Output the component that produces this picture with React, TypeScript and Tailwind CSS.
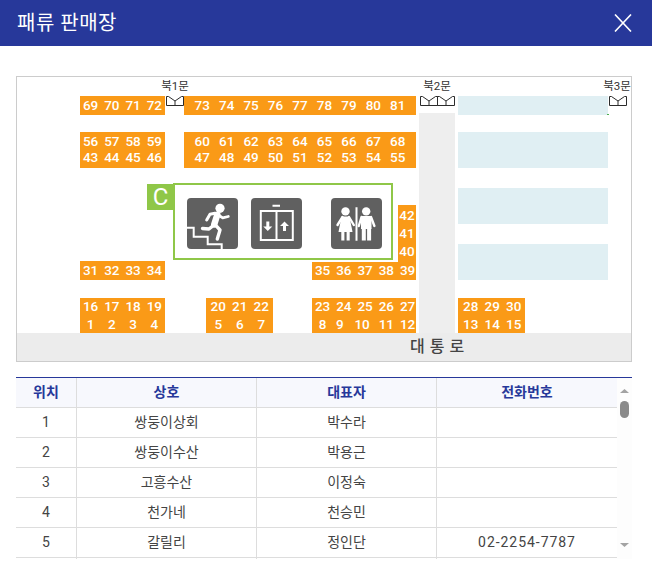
import React from "react";

const Cell = ({ n, className = "" }: { n: number; className?: string }) => (
  <span className={`flex items-center justify-center ${className}`}>{n}</span>
);

const Block = ({ className, nums }: { className: string; nums: (number | [number, string])[] }) => (
  <div className={`grid shrink-0 bg-[#fa9a17] text-[13.5px] font-medium leading-none text-white ${className}`}>
    {nums.map((n) =>
      Array.isArray(n) ? <Cell key={n[0]} n={n[0]} className={n[1]} /> : <Cell key={n} n={n} />
    )}
  </div>
);

const Door = () => (
  <svg width="18" height="10" viewBox="0 0 18 10" fill="none" stroke="#2b2b2b" strokeWidth="1" className="block shrink-0">
    <path d="M.5.5V9.5H17.5V.5H15.5L9 5V9.5M9 5L2.5.5H.5" />
  </svg>
);

const Label = ({ text, className = "" }: { text: string; className?: string }) => (
  <div className={`h-[16px] w-max text-center text-[11.5px] leading-[13px] text-[#333] ${className}`}>{text}</div>
);

const Exit = () => (
  <svg width="51" height="51" viewBox="0 0 51 51" className="block shrink-0 rounded-[4px] bg-[#606060]">
    <circle cx="33" cy="10.3" r="4.6" fill="#fff" />
    <g fill="none" stroke="#fff" strokeLinecap="round" strokeLinejoin="round">
      <path d="M30.3 16.8L27.2 26.5" strokeWidth="6.4" />
      <path d="M31.3 17L35.7 19.9L41.3 18.5" strokeWidth="2.8" />
      <path d="M28 15.3L23 16.3L19.7 22" strokeWidth="3" />
      <path d="M27 27L22 31L15.5 30.5" strokeWidth="3.4" />
      <path d="M29 27.7L33 32L30.3 41" strokeWidth="3.4" />
    </g>
    <path d="M0 29.7H6.7V38.7H20.7V46.3H34.7V51" fill="none" stroke="#fff" strokeWidth="2" />
  </svg>
);

const Elevator = () => (
  <svg width="51" height="51" viewBox="0 0 51 51" className="ml-[12.5px] block shrink-0 rounded-[4px] bg-[#606060]">
    <path d="M21.5 7.7H29" stroke="#fff" strokeWidth="2" />
    <path d="M9.8 42V13H41.8V42M25.5 13V42M8.8 42H42.8" fill="none" stroke="#fff" strokeWidth="2" />
    <path d="M15.3 23.5H18.3V28.5H21.3L16.8 33L12.3 28.5H15.3Z" fill="#fff" />
    <path d="M32 33H35V28H38L33.5 23.5L29 28H32Z" fill="#fff" />
  </svg>
);

const Restroom = () => (
  <svg width="51" height="51" viewBox="0 0 51 51" className="ml-[29px] block shrink-0 rounded-[4px] bg-[#606060]">
    <path d="M25.5 9.3V42.7" stroke="#fff" strokeWidth="2" />
    <circle cx="14.5" cy="13.4" r="4.2" fill="#fff" />
    <circle cx="35.2" cy="13.4" r="4.2" fill="#fff" />
    <path d="M10.5 18.5H18.5L21.5 34H7.5Z" fill="#fff" />
    <path d="M11.5 19L6.5 27M18 19L22.8 27" stroke="#fff" strokeWidth="2.4" strokeLinecap="round" fill="none" />
    <path d="M10.3 33H13.4V42.5H10.3ZM15.6 33H18.7V42.5H15.6Z" fill="#fff" />
    <path d="M31 18H39.8Q40.5 18 40.5 19V31H30V19Q30 18 31 18Z" fill="#fff" />
    <path d="M30.5 19L27.8 28M40 19L43.4 28" stroke="#fff" strokeWidth="2.4" strokeLinecap="round" fill="none" />
    <path d="M30.8 30H34.8V42.5H30.8ZM36.1 30H40.1V42.5H36.1Z" fill="#fff" />
  </svg>
);

const rows = [
  ["1", "쌍둥이상회", "박수라", ""],
  ["2", "쌍둥이수산", "박용근", ""],
  ["3", "고흥수산", "이정숙", ""],
  ["4", "천가네", "천승민", ""],
  ["5", "갈릴리", "정인단", "02-2254-7787"],
  ["", "", "", ""],
];

const th = "h-[30px] border-b border-r border-[#ddd] bg-[#f7f8fd] p-0 text-center text-[14px] font-bold text-[#27389a]";
const td = "h-[30px] border-b border-r border-[#ddd] p-0 text-center text-[14px] font-normal text-[#444]";

export default function App() {
  return (
    <div className="h-[572px] w-[652px] overflow-hidden bg-white font-['Roboto','Noto_Sans_CJK_KR',sans-serif]">
      <header className="flex h-[46px] items-center justify-between bg-[#27389a] pl-[17px] pr-[20px]">
        <h1 className="text-[20px] font-normal leading-none tracking-[0.5px] text-white">패류 판매장</h1>
        <svg width="18" height="18" viewBox="0 0 18 18" fill="none" stroke="#fff" strokeWidth="1.6" className="block">
          <path d="M1 .5L17 17.5M17 .5L1 17.5" />
        </svg>
      </header>

      <main className="px-4 pt-[30px]">
        {/* floor plan */}
        <div className="flex h-[286px] w-[616px] flex-col border border-[#ccc] bg-white">
          <div className="flex h-[256px]">
            {/* west hall */}
            <div className="flex w-[399px] shrink-0 flex-col pt-[3px]">
              <div className="flex w-[316px] justify-center"><Label text="북1문" /></div>
              <div className="flex h-[19px] pl-[63px]">
                <Block className="w-[85px] grid-cols-[repeat(4,21.25px)]" nums={[69, 70, 71, 72]} />
                <div className="w-[19px] pl-px"><Door /></div>
                <Block className="w-[232px] grid-cols-9 px-[6px]" nums={[73, 74, 75, 76, 77, 78, 79, 80, 81]} />
              </div>
              <div className="mt-[17px] flex h-[36px] gap-[19px] pl-[63px]">
                <Block className="w-[85px] auto-rows-[16px] grid-cols-[repeat(4,21.25px)] pt-[2px]" nums={[56, 57, 58, 59, 43, 44, 45, 46]} />
                <Block className="w-[232px] auto-rows-[16px] grid-cols-9 px-[6px] pt-[2px]" nums={[60, 61, 62, 63, 64, 65, 66, 67, 68, 47, 48, 49, 50, 51, 52, 53, 54, 55]} />
              </div>
              <div className="mt-[15px] flex h-[77px] items-start pl-[130px]">
                <div className="mt-px flex h-[26px] w-[27px] shrink-0 items-center justify-center bg-[#8fc748] text-[24px] leading-none text-white">C</div>
                <div className="-ml-px flex h-[77px] w-[220px] shrink-0 items-start border-2 border-[#8fc748] bg-white pl-[12px] pt-[13px]">
                  <Exit />
                  <Elevator />
                  <Restroom />
                </div>
                <Block className="ml-[5px] mt-[22px] h-[57px] w-[18px] auto-rows-[18px] grid-cols-1 pt-[2px]" nums={[42, 41, 40]} />
              </div>
              <div className="mt-px flex h-[19px] items-end pl-[63px]">
                <Block className="h-[19px] w-[85px] grid-cols-[repeat(4,21.25px)]" nums={[31, 32, 33, 34]} />
                <Block className="ml-[147px] h-[18px] w-[104px] grid-cols-[repeat(5,21.25px)]" nums={[35, 36, 37, 38, 39]} />
              </div>
              <div className="mt-[18px] flex h-[35px] pl-[63px]">
                <Block className="w-[85px] auto-rows-[18px] grid-cols-[repeat(4,21.25px)]" nums={[16, 17, 18, 19, 1, 2, 3, 4]} />
                <Block className="ml-[41px] w-[67px] auto-rows-[18px] grid-cols-[repeat(3,21.5px)] pl-[1.5px]" nums={[20, 21, 22, 5, 6, 7]} />
                <Block className="ml-[39px] w-[104px] auto-rows-[18px] grid-cols-[repeat(5,21.25px)]" nums={[23, 24, 25, 26, 27, 8, [9, "-translate-x-[4px]"], [10, "-translate-x-[3px]"], 11, 12]} />
              </div>
            </div>

            {/* central aisle */}
            <div className="ml-[3px] flex w-[36px] shrink-0 flex-col items-center pt-[3px]">
              <Label text="북2문" />
              <div className="flex h-[17px] w-[34px]">
                <div className="w-[17px]"><Door /></div>
                <div className="w-[17px]"><Door /></div>
              </div>
              <div className="w-full flex-1 bg-[#eee]" />
            </div>

            {/* east hall */}
            <div className="ml-[3px] flex w-[150px] shrink-0 flex-col pt-[19px]">
              <div className="relative h-[19px] shrink-0 bg-[#e0eff3]">
                <div className="absolute left-[149px] top-[18px] h-px w-[2px] bg-[#4caf50]" />
              </div>
              <div className="mt-[17px] h-[36px] shrink-0 bg-[#e0eff3]" />
              <div className="mt-[20px] h-[36px] shrink-0 bg-[#e0eff3]" />
              <div className="mt-[20px] h-[36px] shrink-0 bg-[#e0eff3]" />
              <Block className="mt-[18px] h-[35px] w-[67px] auto-rows-[18px] grid-cols-[repeat(3,21.5px)] pl-[2px]" nums={[28, 29, 30, 13, 14, 15]} />
            </div>

            {/* north door 3 */}
            <div className="ml-px flex w-[18px] shrink-0 flex-col items-center pt-[3px]">
              <Label text="북3문" className="-translate-x-px" />
              <Door />
            </div>
          </div>

          <div className="flex h-[28px] shrink-0 items-center bg-[#ececec] pl-[393px] text-[16px] font-medium tracking-[0.5px] text-[#444]">대 통 로</div>
        </div>

        {/* tenant table */}
        <div className="mt-[15px] flex h-[182px] w-[616px] overflow-hidden border-t border-[#27389a]">
          <table className="h-fit w-[601px] shrink-0 table-fixed border-separate border-spacing-0">
            <colgroup>
              <col className="w-[61px]" />
              <col className="w-[180px]" />
              <col className="w-[180px]" />
              <col className="w-[180px]" />
            </colgroup>
            <thead>
              <tr>
                <th className={th}>위치</th>
                <th className={th}>상호</th>
                <th className={th}>대표자</th>
                <th className={`${th} border-r-0`}>전화번호</th>
              </tr>
            </thead>
            <tbody>
              {rows.map((r, i) => (
                <tr key={i}>
                  <td className={td}>{r[0]}</td>
                  <td className={td}>{r[1]}</td>
                  <td className={td}>{r[2]}</td>
                  <td className={`${td} border-r-0 tracking-[0.95px]`}>{r[3]}</td>
                </tr>
              ))}
            </tbody>
          </table>
          <div className="flex w-[15px] shrink-0 flex-col items-center bg-[#fdfdfd] pb-[12px] pt-[11px]">
            <svg width="9" height="4" viewBox="0 0 9 4" className="block shrink-0"><path d="M4.5 0L9 4H0Z" fill="#a3a3a3" /></svg>
            <div className="mt-[8px] h-[17px] w-[9px] shrink-0 rounded-full bg-[#8a8a8a]" />
            <svg width="9" height="4" viewBox="0 0 9 4" className="mt-auto block shrink-0"><path d="M0 0H9L4.5 4Z" fill="#a3a3a3" /></svg>
          </div>
        </div>
      </main>
    </div>
  );
}
